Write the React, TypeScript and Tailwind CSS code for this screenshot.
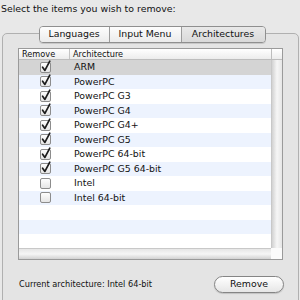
const rows = [
  { name: "ARM", checked: true },
  { name: "PowerPC", checked: true },
  { name: "PowerPC G3", checked: true },
  { name: "PowerPC G4", checked: true },
  { name: "PowerPC G4+", checked: true },
  { name: "PowerPC G5", checked: true },
  { name: "PowerPC 64-bit", checked: true },
  { name: "PowerPC G5 64-bit", checked: true },
  { name: "Intel", checked: false },
  { name: "Intel 64-bit", checked: false },
  { name: "", checked: null },
  { name: "", checked: null },
  { name: "", checked: null },
];

const tabs = [
  { label: "Languages", w: "w-[69px]" },
  { label: "Input Menu", w: "w-[72px]" },
  { label: "Architectures", w: "w-[84px]", active: true },
];

// Aqua style checkbox, tick pokes out over the top edge
const Check = ({ on }: { on: boolean }) => (
  <svg width="13" height="13" viewBox="0 0 13 13">
    <defs>
      <linearGradient id="cb" x1="0" y1="0" x2="0" y2="1">
        <stop offset="0" stopColor="#ffffff" />
        <stop offset="1" stopColor="#e4e4e4" />
      </linearGradient>
    </defs>
    <rect x="1.5" y="2.5" width="10" height="10" rx="1.5" fill="url(#cb)" stroke="#8c8c8c" />
    {on && <path d="M3.6 7.2 L5.9 10.4 L10.8 1.2" fill="none" stroke="#1c1c1c" strokeWidth="1.7" strokeLinecap="round" strokeLinejoin="round" />}
  </svg>
);

const App = () => {
  return (
    <div className="w-[300px] h-[300px] overflow-hidden bg-[#e8e8e8] text-[#111] font-['DejaVu_Sans',sans-serif]">
      <p className="pl-[1px] pt-[3px] text-[9.4px] leading-[12px]">Select the items you wish to remove:</p>

      {/* segmented tab control sitting on the group box edge */}
      <div className="relative z-10 mt-[11px] -mb-[10px] flex justify-center pl-[4px]">
        <div className="flex h-[17px] rounded-[4px] border border-[#8f8f8f] overflow-hidden shadow-[0_1px_0_rgba(0,0,0,0.12)]">
          {tabs.map((t, i) => (
            <div
              key={t.label}
              className={`${t.w} flex items-center justify-center text-[9.4px] ${i > 0 ? "border-l border-[#9c9c9c]" : ""} ${t.active ? "bg-gradient-to-b from-[#e9e9e9] to-[#d9d9d9]" : "bg-gradient-to-b from-[#fdfdfd] to-[#ebebeb]"}`}
            >
              {t.label}
            </div>
          ))}
        </div>
      </div>

      <div className="ml-[2px] w-[297px] h-[290px] rounded-[5px] border border-[#b0b0b0] bg-[#e4e4e4] pt-[14px] pl-[15px]">
        <div className="w-[265px] h-[212px] border border-[#9a9a9a] bg-white grid grid-cols-[252px_11px] grid-rows-[11px_188px_11px]">
          {/* header */}
          <div className="flex border-b border-[#bdbdbd] bg-gradient-to-b from-[#ffffff] to-[#ececec] text-[8.2px] leading-[10px]">
            <div className="w-[51px] border-r border-[#c4c4c4] pl-[3px] flex items-center">Remove</div>
            <div className="pl-[3px] flex items-center">Architecture</div>
          </div>
          <div className="border-b border-l border-[#bdbdbd] bg-gradient-to-b from-[#ffffff] to-[#ececec]" />

          {/* rows */}
          <div className="overflow-hidden">
            {rows.map((r, i) => (
              <div
                key={i}
                className={`flex h-[14.5px] items-center ${i === 0 ? "bg-[#d4d4d4]" : i % 2 === 1 ? "bg-[#edf3fe]" : "bg-white"}`}
              >
                <div className="w-[52px] flex justify-center pl-[1px] -mt-[2px]">
                  {r.checked !== null && <Check on={r.checked} />}
                </div>
                <span className="pl-[3px] text-[9.4px]">{r.name}</span>
              </div>
            ))}
          </div>
          <div className="border-l border-[#c8c8c8] bg-gradient-to-r from-[#d2d2d2] via-[#f6f6f6] to-[#e6e6e6]" />

          <div className="border-t border-[#c8c8c8] bg-gradient-to-b from-[#e6e6e6] via-[#f6f6f6] to-[#d2d2d2]" />
          <div className="bg-[#fbfbfb]" />
        </div>

        <div className="mt-[16px] flex items-center justify-between pr-[14px]">
          <span className="pl-[1px] text-[8.2px]">Current architecture: Intel 64-bit</span>
          <button className="w-[70px] h-[17px] rounded-full border border-[#858585] bg-gradient-to-b from-[#ffffff] to-[#e6e6e6] text-[9.4px] shadow-[0_1px_1px_rgba(0,0,0,0.15)]">
            Remove
          </button>
        </div>
      </div>
    </div>
  );
};

export default App;
